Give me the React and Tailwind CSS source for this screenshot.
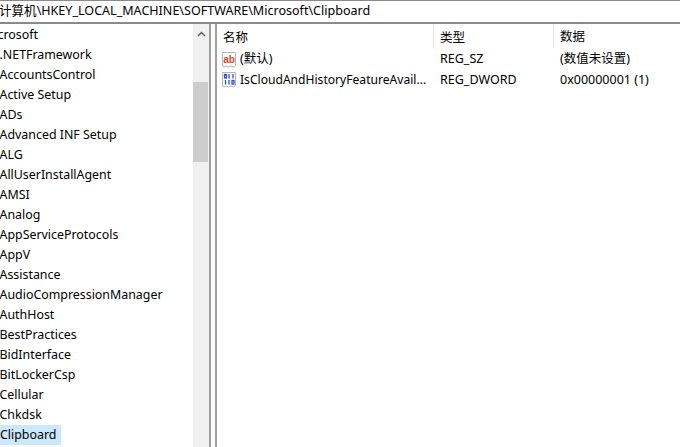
import React from "react";

const keys = [
  "Microsoft",
  ".NETFramework",
  "AccountsControl",
  "Active Setup",
  "ADs",
  "Advanced INF Setup",
  "ALG",
  "AllUserInstallAgent",
  "AMSI",
  "Analog",
  "AppServiceProtocols",
  "AppV",
  "Assistance",
  "AudioCompressionManager",
  "AuthHost",
  "BestPractices",
  "BidInterface",
  "BitLockerCsp",
  "Cellular",
  "Chkdsk",
  "Clipboard",
];

function ValueIcon({ children }) {
  return (
    <svg width="16" height="16" viewBox="0 0 16 16" className="shrink-0">
      <path d="M1.500 0.500h13v13l-2 1.500-2.500-1-2.500 1-2.500-1-2 1-1.500-1z" fill="#fff" stroke="#b4b4b4" />
      {children}
    </svg>
  );
}

function StringIcon() {
  return (
    <ValueIcon>
      <text x="2.200" y="10.500" fontSize="10" fontWeight="700" fill="#d9482b" fontFamily="Liberation Sans, sans-serif">ab</text>
    </ValueIcon>
  );
}

function BinaryIcon() {
  return (
    <ValueIcon>
      <g fill="none" stroke="#2a4fd6" strokeWidth="1.300">
        <rect x="3.500" y="2.500" width="2" height="3.500" />
        <path d="M8 2v4.500" />
        <path d="M12 2v4.500" />
        <path d="M4.500 8v4.500" />
        <path d="M8 8v4.500" />
        <rect x="11" y="8.500" width="2" height="3.500" />
      </g>
    </ValueIcon>
  );
}

export default function App() {
  return (
    <div className="flex h-[447px] w-[680px] flex-col overflow-hidden bg-white font-['Noto_Sans','Noto_Sans_CJK_SC',sans-serif] text-[12.5px] text-[#000]">
      <div className="flex h-[24px] shrink-0 items-center border-t border-b-2 border-[#8a8a8a] whitespace-nowrap">
        <span className="-ml-[1px] text-[12.56px]">计算机\HKEY_LOCAL_MACHINE\SOFTWARE\Microsoft\Clipboard</span>
      </div>
      <div className="flex min-h-0 flex-1">
        <div className="flex w-[211px] shrink-0 overflow-hidden border-r-2 border-[#a0a0a0]">
          <div className="flex w-[193px] shrink-0 flex-col overflow-hidden pt-[1px] text-[12.4px]">
            {keys.map((k, i) => (
              <div key={k} className="flex h-[20px] shrink-0 items-center whitespace-nowrap">
                {k === "Clipboard" ? (
                  <div className="flex h-[20px] w-[61px] items-center bg-[#cce8ff]">{k}</div>
                ) : (
                  <span className={i === 0 ? "-ml-[17px]" : "-ml-[0.5px]"}>{k}</span>
                )}
              </div>
            ))}
          </div>
          <div className="flex w-[16px] shrink-0 flex-col bg-[#f0f0f0]">
            <div className="flex h-[58px] justify-center pt-[7px]">
              <svg width="9" height="6" viewBox="0 0 9 6"><path d="M1 5l3.500-3.500L8 5" fill="none" stroke="#606060" strokeWidth="1.500" /></svg>
            </div>
            <div className="h-[80px] w-[15px] bg-[#cdcdcd]" />
          </div>
        </div>
        <div className="ml-[4px] flex min-w-0 flex-1 flex-col border-l-2 border-[#a0a0a0]">
          <div className="flex h-[24px] items-center whitespace-nowrap">
            <div className="h-[24px] w-[217px] border-r border-[#e5e5e5] pt-[2px] pl-[6px] leading-[24px]">名称</div>
            <div className="h-[24px] w-[120px] border-r border-[#e5e5e5] pt-[2px] pl-[6px] leading-[24px]">类型</div>
            <div className="pt-[2px] pl-[6px] leading-[24px]">数据</div>
          </div>
          <div className="flex h-[20px] items-center whitespace-nowrap pt-[3px]">
            <div className="flex w-[216px] items-center gap-[3px] pl-[4px]"><StringIcon /><span>(默认)</span></div>
            <div className="w-[120px] pl-[7px]">REG_SZ</div>
            <div className="pl-[7px]">(数值未设置)</div>
          </div>
          <div className="flex h-[22px] items-center whitespace-nowrap pt-[2px]">
            <div className="flex w-[216px] items-center gap-[3px] pl-[4px]"><BinaryIcon /><span className="text-[12.1px]">IsCloudAndHistoryFeatureAvail...</span></div>
            <div className="w-[120px] pl-[7px]">REG_DWORD</div>
            <div className="pl-[7px]">0x00000001 (1)</div>
          </div>
        </div>
      </div>
    </div>
  );
}
